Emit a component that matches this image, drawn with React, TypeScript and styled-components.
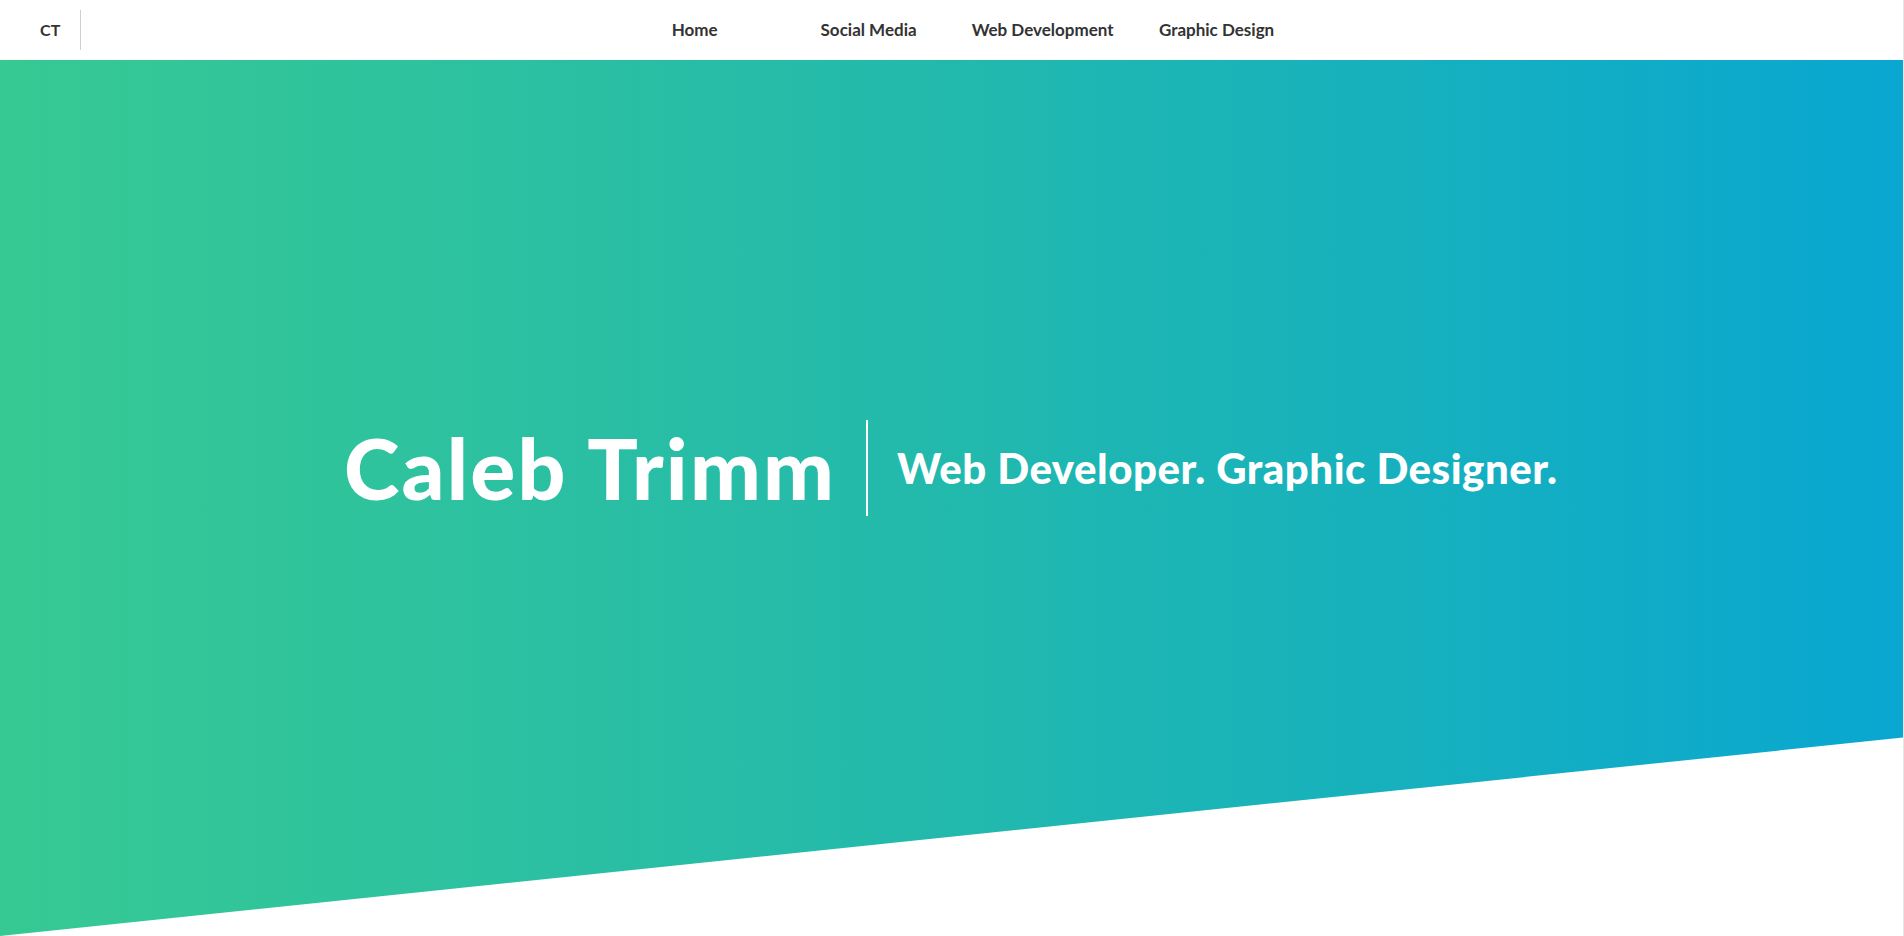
import React from "react";
import styled, { createGlobalStyle } from "styled-components";

const GlobalStyle = createGlobalStyle`
  html, body {
    margin: 0;
    padding: 0;
    background: #ffffff;
  }
  body {
    font-family: Lato, "Liberation Sans", sans-serif;
    overflow: hidden;
  }
  #root {
    border-right: 1px solid #e6e6e6;
    min-height: 936px;
  }
`;

const NavBar = styled.header`
  position: fixed;
  top: 0;
  left: 0;
  right: 1px;
  height: 60px;
  background: #ffffff;
  display: flex;
  align-items: center;
  z-index: 10;
`;

const Brand = styled.div`
  display: flex;
  align-items: center;
  height: 40px;
  padding: 0 19px 2px 40px;
  box-sizing: border-box;
  border-right: 1px solid #cfcfcf;
  font-weight: 700;
  font-size: 16px;
  color: #333333;
  letter-spacing: 0.2px;
`;

const Links = styled.nav`
  display: flex;
  align-items: center;
  margin-left: 527px;
  padding-bottom: 2px;
`;

const NavLink = styled.a`
  width: 174px;
  text-align: center;
  font-weight: 700;
  font-size: 17px;
  color: #333333;
  text-decoration: none;
  white-space: nowrap;
  cursor: pointer;
`;

const Hero = styled.section`
  height: 936px;
  background: linear-gradient(to right, #37c993 0%, #22b9ad 50%, #09a7d1 100%);
  clip-path: polygon(0 0, 100% 0, 100% 78.8%, 0 100%);
  display: grid;
  grid-template-columns: 866px 2px auto;
  align-items: center;
  align-content: center;
`;

const Name = styled.h1`
  margin: 0 30px 0 0;
  justify-self: end;
  font-weight: 900;
  font-size: 84px;
  line-height: 96px;
  color: #ffffff;
  letter-spacing: 2.2px;
  white-space: nowrap;
`;

const Divider = styled.div`
  width: 2px;
  height: 96px;
  background: #ffffff;
`;

const Tagline = styled.h2`
  margin: 0 0 0 29px;
  font-weight: 900;
  font-size: 42px;
  color: #ffffff;
  white-space: nowrap;
  letter-spacing: 0.5px;
`;

const links = ["Home", "Social Media", "Web Development", "Graphic Design"];

export default function App() {
  return (
    <>
      <GlobalStyle />
      <NavBar>
        <Brand>CT</Brand>
        <Links>
          {links.map((l) => (
            <NavLink key={l}>{l}</NavLink>
          ))}
        </Links>
      </NavBar>
      <Hero>
        <Name>Caleb Trimm</Name>
        <Divider />
        <Tagline>Web Developer. Graphic Designer.</Tagline>
      </Hero>
    </>
  );
}
